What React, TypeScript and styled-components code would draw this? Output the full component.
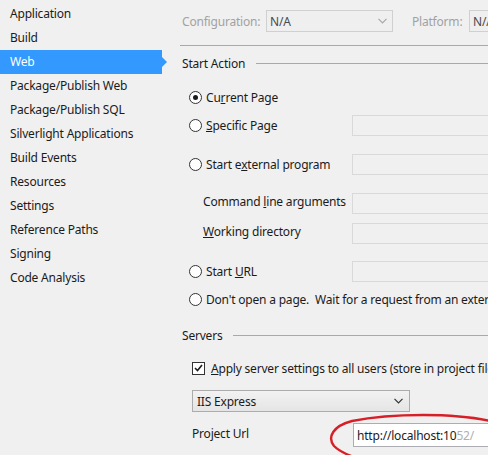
import React from 'react';
import styled, { createGlobalStyle } from 'styled-components';

const GlobalStyle = createGlobalStyle`
  html, body {
    margin: 0;
    padding: 0;
    background: #f0f0f0;
    overflow: hidden;
  }
  body {
    font-family: "Noto Sans", "Liberation Sans", sans-serif;
    font-size: 12px;
    letter-spacing: -0.2px;
    color: #1b1b1b;
  }
`;

const navItems = [
  'Application',
  'Build',
  'Web',
  'Package/Publish Web',
  'Package/Publish SQL',
  'Silverlight Applications',
  'Build Events',
  'Resources',
  'Settings',
  'Reference Paths',
  'Signing',
  'Code Analysis',
];

const Page = styled.div`
  position: relative;
  display: flex;
  width: 488px;
  height: 455px;
  overflow: hidden;
`;

const Sidebar = styled.nav`
  width: 170px;
  flex-shrink: 0;
  padding-top: 2px;
  display: flex;
  flex-direction: column;
`;

const NavItem = styled.div<{ $active?: boolean }>`
  position: relative;
  height: 24px;
  line-height: 24px;
  margin-right: 8px;
  padding-left: 10px;
  white-space: nowrap;
  background: ${(p) => (p.$active ? '#3399ff' : 'transparent')};
  color: ${(p) => (p.$active ? '#ffffff' : '#1b1b1b')};

  &::after {
    content: '';
    display: ${(p) => (p.$active ? 'block' : 'none')};
    position: absolute;
    right: -5px;
    top: 7px;
    border-top: 5px solid transparent;
    border-bottom: 5px solid transparent;
    border-left: 5px solid #3399ff;
  }
`;

const Content = styled.main`
  flex: 1;
  min-width: 0;
  overflow: hidden;
  padding-left: 10px;
  display: flex;
  flex-direction: column;
`;

const ConfigBar = styled.div`
  display: flex;
  align-items: center;
  height: 22px;
  margin-top: 10px;
  padding-left: 2px;
`;

const DimLabel = styled.span<{ $width: number }>`
  width: ${(p) => p.$width}px;
  flex-shrink: 0;
  color: #a2a2a2;
  white-space: nowrap;
`;

const DisabledSelect = styled.div<{ $width: number }>`
  box-sizing: border-box;
  width: ${(p) => p.$width}px;
  flex-shrink: 0;
  height: 22px;
  border: 1px solid #d0d0d0;
  background: #efefef;
  display: flex;
  align-items: center;
  justify-content: space-between;
  padding: 0 5px 0 3px;
  color: #4a4a4a;
  margin-right: 19px;
`;

const Rule = styled.div`
  height: 1px;
  background: #a9a9a9;
  margin-top: 13px;
`;

const SectionHeader = styled.div<{ $top: number }>`
  display: flex;
  align-items: center;
  gap: 11px;
  height: 16px;
  margin-top: ${(p) => p.$top}px;
  padding-left: 2px;

  &::after {
    content: '';
    flex: 1;
    height: 1px;
    background: #a9a9a9;
  }
`;

const OptionRow = styled.div<{ $top: number }>`
  display: flex;
  align-items: center;
  height: 21px;
  margin-top: ${(p) => p.$top}px;
  white-space: nowrap;
`;

const OptionLabel = styled.label<{ $indent: number; $raise?: number }>`
  box-sizing: border-box;
  width: 172px;
  flex-shrink: 0;
  padding-left: ${(p) => p.$indent}px;
  margin-top: ${(p) => -(p.$raise ?? 0)}px;
  display: flex;
  align-items: center;
  gap: 4px;
`;

const Radio = styled.span<{ $checked?: boolean }>`
  box-sizing: border-box;
  width: 13px;
  height: 13px;
  flex-shrink: 0;
  border-radius: 50%;
  border: 1px solid #333333;
  background: #ffffff;
  display: flex;
  align-items: center;
  justify-content: center;

  &::after {
    content: '';
    display: ${(p) => (p.$checked ? 'block' : 'none')};
    width: 5px;
    height: 5px;
    border-radius: 50%;
    background: #1b1b1b;
  }
`;

const TextBox = styled.div<{ $enabled?: boolean }>`
  box-sizing: border-box;
  width: 200px;
  height: ${(p) => (p.$enabled ? 24 : 21)}px;
  flex-shrink: 0;
  border: 1px solid ${(p) => (p.$enabled ? '#abadb3' : '#d9d9d9')};
  background: ${(p) => (p.$enabled ? '#ffffff' : '#f0f0f0')};
  padding-left: 3px;
  display: flex;
  align-items: center;
  color: #1b1b1b;
`;

const CheckRow = styled.div`
  display: flex;
  align-items: center;
  gap: 6px;
  height: 20px;
  margin-top: 15px;
  padding-left: 12px;
  white-space: nowrap;
`;

const CheckBox = styled.span`
  box-sizing: border-box;
  width: 13px;
  height: 13px;
  flex-shrink: 0;
  border: 1px solid #333333;
  background: #ffffff;
  display: flex;
  align-items: center;
  justify-content: center;
`;

const ServerSelect = styled.div`
  box-sizing: border-box;
  width: 218px;
  height: 22px;
  margin-top: 12px;
  margin-left: 12px;
  border: 1px solid #acacac;
  background: linear-gradient(#f2f2f2, #e5e5e5);
  display: flex;
  align-items: center;
  justify-content: space-between;
  padding: 0 6px 0 4px;
  color: #1b1b1b;
`;

const UrlRow = styled.div`
  display: flex;
  align-items: center;
  margin-top: 11px;
  height: 24px;
  white-space: nowrap;
`;

const UrlLabel = styled.span`
  box-sizing: border-box;
  width: 173px;
  flex-shrink: 0;
  padding-left: 12px;
  margin-top: -4px;
`;

const Faded = styled.span`
  color: #b0b0b0;
`;

const Annotation = styled.svg`
  position: absolute;
  left: 0;
  top: 0;
  pointer-events: none;
`;

const Chevron = ({ color }: { color: string }) => (
  <svg width="9" height="6" viewBox="0 0 9 6">
    <path d="M0.5 0.8 L4.5 4.8 L8.5 0.8" fill="none" stroke={color} strokeWidth="1.2" />
  </svg>
);

const App = () => {
  return (
    <>
      <GlobalStyle />
      <Page>
        <Sidebar>
          {navItems.map((item) => (
            <NavItem key={item} $active={item === 'Web'}>
              {item}
            </NavItem>
          ))}
        </Sidebar>

        <Content>
          <ConfigBar>
            <DimLabel $width={84}>Configuration:</DimLabel>
            <DisabledSelect $width={127}>
              N/A
              <Chevron color="#a8a8a8" />
            </DisabledSelect>
            <DimLabel $width={57}>Platform:</DimLabel>
            <DisabledSelect $width={100}>N/A</DisabledSelect>
          </ConfigBar>
          <Rule />

          <SectionHeader $top={9}>Start Action</SectionHeader>

          <OptionRow $top={16}>
            <OptionLabel $indent={9}>
              <Radio $checked />
              <span>
                Cu<u>r</u>rent Page
              </span>
            </OptionLabel>
          </OptionRow>
          <OptionRow $top={7}>
            <OptionLabel $indent={9}>
              <Radio />
              <span>
                <u>S</u>pecific Page
              </span>
            </OptionLabel>
            <TextBox />
          </OptionRow>
          <OptionRow $top={18}>
            <OptionLabel $indent={9}>
              <Radio />
              <span>
                Start e<u>x</u>ternal program
              </span>
            </OptionLabel>
            <TextBox />
          </OptionRow>
          <OptionRow $top={18}>
            <OptionLabel $indent={23} $raise={5}>
              <span>
                Command <u>l</u>ine arguments
              </span>
            </OptionLabel>
            <TextBox />
          </OptionRow>
          <OptionRow $top={9}>
            <OptionLabel $indent={23} $raise={5}>
              <span>
                <u>W</u>orking directory
              </span>
            </OptionLabel>
            <TextBox />
          </OptionRow>
          <OptionRow $top={17}>
            <OptionLabel $indent={9}>
              <Radio />
              <span>
                Start <u>U</u>RL
              </span>
            </OptionLabel>
            <TextBox />
          </OptionRow>
          <OptionRow $top={7}>
            <OptionLabel $indent={9}>
              <Radio />
              <span>Don't open a page.&nbsp; Wait for a request from an external application.</span>
            </OptionLabel>
          </OptionRow>

          <SectionHeader $top={17}>Servers</SectionHeader>

          <CheckRow>
            <CheckBox>
              <svg width="9" height="8" viewBox="0 0 9 8">
                <path d="M1 4 L3.5 6.5 L8 1" fill="none" stroke="#1b1b1b" strokeWidth="1.6" />
              </svg>
            </CheckBox>
            <span>
              <u>A</u>pply server settings to all users (store in project file)
            </span>
          </CheckRow>

          <ServerSelect>
            IIS Express
            <Chevron color="#333333" />
          </ServerSelect>

          <UrlRow>
            <UrlLabel>Project Url</UrlLabel>
            <TextBox $enabled>
              http://localhost:10<Faded>52/</Faded>
            </TextBox>
          </UrlRow>
        </Content>

        <Annotation width="488" height="455" viewBox="0 0 488 455">
          <path
            d="M490 421 C455 413, 392 413, 352 421 C333 426, 327 437, 334 446 C340 452, 350 456, 360 459"
            fill="none"
            stroke="#d61f26"
            strokeWidth="2.4"
            strokeLinecap="round"
          />
        </Annotation>
      </Page>
    </>
  );
};

export default App;
